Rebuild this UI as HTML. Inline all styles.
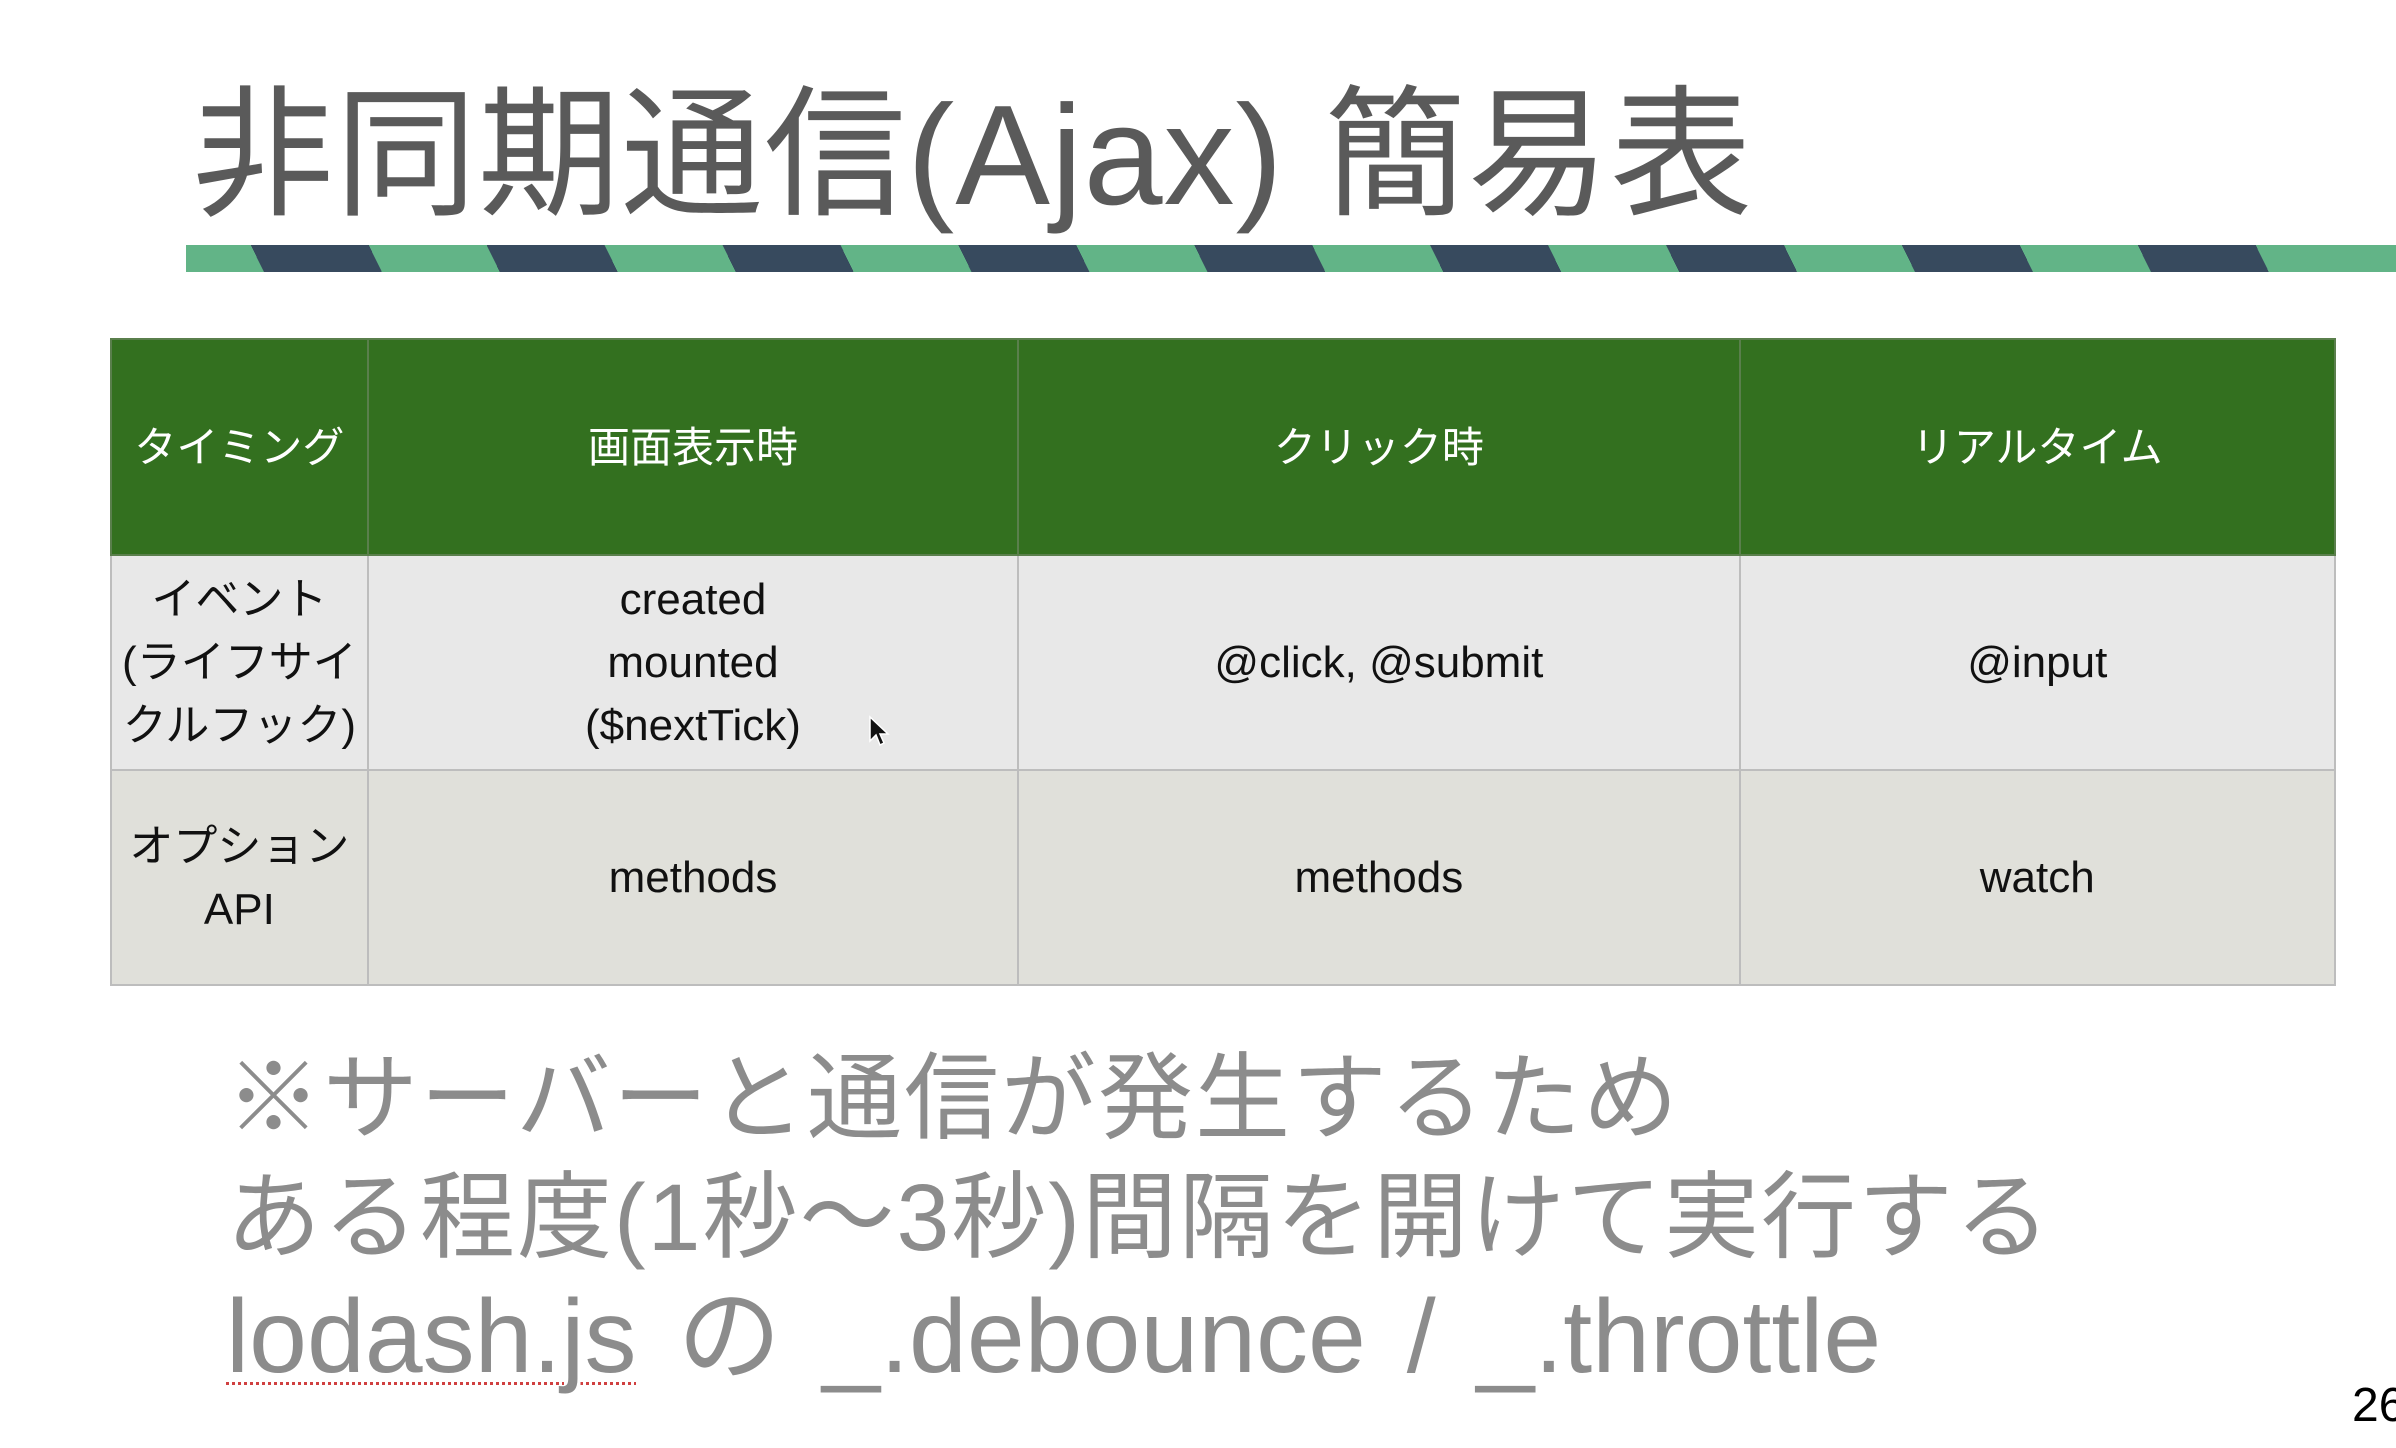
<!DOCTYPE html>
<html><head><meta charset="utf-8"><style>
html,body{margin:0;padding:0;background:#fff;}
body{width:2396px;height:1448px;position:relative;overflow:hidden;font-family:"Liberation Sans","Noto Sans CJK JP",sans-serif;}
.title{position:absolute;left:192px;top:76px;font-size:142px;line-height:160px;color:#5a5a5a;white-space:nowrap;letter-spacing:1px;}
.stripe{position:absolute;left:186px;top:245px;width:2210px;height:27px;
background:repeating-linear-gradient(64deg,#62b487 0px,#62b487 106px,#374a5e 106px,#374a5e 212px);background-position:-40px 0;}
table{position:absolute;left:110px;top:338px;border-collapse:collapse;width:2226px;font-size:44px;}
td{border:2px solid #bdbdbd;text-align:center;vertical-align:middle;padding:0;line-height:63px;color:#111;}
tr.h td{background:#33701f;color:#fff;height:214px;border-color:#5a7f4c;font-size:42px;}
tr.r1 td{background:#e8e8e8;height:213px;}
tr.r2 td{background:#e0e0da;height:213px;}
.note{position:absolute;left:226px;top:1040px;font-size:95px;line-height:119px;color:#8c8c8c;white-space:nowrap;letter-spacing:2px;}
.l3{font-size:104px;word-spacing:12px;letter-spacing:0;}
.u{text-decoration:underline dotted #d04040;text-underline-offset:10px;text-decoration-thickness:3px;}
.pg{position:absolute;left:2352px;top:1378px;font-size:48px;color:#000;}
</style></head><body>
<div class="title">非同期通信(Ajax) 簡易表</div>
<div class="stripe"></div>
<table>
<colgroup><col style="width:257px"><col style="width:651px"><col style="width:722px"><col style="width:596px"></colgroup>
<tr class="h"><td>タイミング</td><td>画面表示時</td><td>クリック時</td><td>リアルタイム</td></tr>
<tr class="r1"><td>イベント<br>(ライフサイ<br>クルフック)</td><td>created<br>mounted<br>($nextTick)</td><td>@click, @submit</td><td>@input</td></tr>
<tr class="r2"><td>オプション<br>API</td><td>methods</td><td>methods</td><td>watch</td></tr>
</table>
<svg style="position:absolute;left:868px;top:715px" width="24" height="36" viewBox="0 0 24 36"><path d="M2 2 L2 26 L8 20 L12 30 L16 28 L12 19 L20 19 Z" fill="#111" stroke="#fff" stroke-width="1.5"/></svg>
<div class="note">※サーバーと通信が発生するため<br>ある程度(1秒〜3秒)間隔を開けて実行する<br><span class="l3"><span class="u">lodash.js</span> の _.debounce / _.throttle</span></div>
<div class="pg">26</div>
</body></html>
